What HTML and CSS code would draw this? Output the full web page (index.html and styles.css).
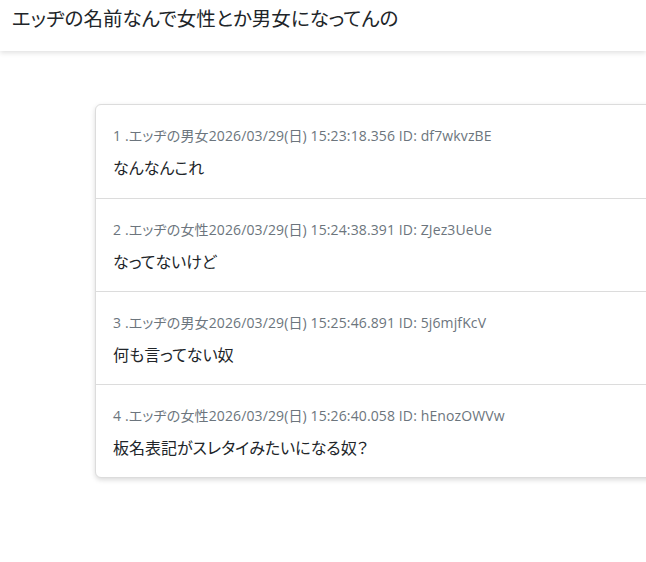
FILE: index.html
```html
<!DOCTYPE html>
<html lang="ja">
<head>
<meta charset="utf-8">
<title>スレ</title>
<link rel="stylesheet" href="styles.css">
</head>
<body>
<header class="topbar">
  <h1 class="title">エッヂの名前なんで女性とか男女になってんの</h1>
</header>
<main class="content">
  <ul class="posts">
    <li class="post">
      <div class="meta">1 .エッヂの男女2026/03/29(日) 15:23:18.356 ID: df7wkvzBE</div>
      <div class="body">なんなんこれ</div>
    </li>
    <li class="post">
      <div class="meta">2 .エッヂの女性2026/03/29(日) 15:24:38.391 ID: ZJez3UeUe</div>
      <div class="body">なってないけど</div>
    </li>
    <li class="post">
      <div class="meta">3 .エッヂの男女2026/03/29(日) 15:25:46.891 ID: 5j6mjfKcV</div>
      <div class="body">何も言ってない奴</div>
    </li>
    <li class="post">
      <div class="meta">4 .エッヂの女性2026/03/29(日) 15:26:40.058 ID: hEnozOWVw</div>
      <div class="body">板名表記がスレタイみたいになる奴？</div>
    </li>
  </ul>
</main>
</body>
</html>
```
FILE: styles.css
```css
html, body {
  margin: 0;
  padding: 0;
  background: #fff;
  overflow: hidden;
  width: 646px;
  height: 562px;
}
body {
  font-family: "Open Sans", "Noto Sans CJK JP", sans-serif;
  font-feature-settings: "palt";
  color: #212529;
}
.topbar {
  height: 51px;
  box-shadow: 0 2px 5px rgba(0,0,0,0.12);
  padding: 0 12px;
  display: flex;
  align-items: flex-start;
}
.title {
  margin: 0;
  padding-top: 5px;
  font-size: 19.5px;
  font-weight: 400;
  line-height: 28px;
}
.content {
  padding: 53px 0 0 95px;
}
.posts {
  list-style: none;
  margin: 0;
  padding: 0;
  width: 620px;
  border: 1px solid #dcdcdc;
  border-radius: 6px;
  box-shadow: 0 2px 5px rgba(0,0,0,0.15);
  background: #fff;
}
.post {
  padding: 20px 17px 17px;
  border-top: 1px solid #dcdcdc;
}
.post:first-child {
  border-top: none;
  padding-bottom: 18px;
}
.meta {
  font-size: 14px;
  line-height: 21px;
  letter-spacing: 0.12px;
  color: #6c757d;
}
.body {
  margin-top: 10px;
  font-size: 16px;
  line-height: 24px;
  color: #212529;
}
```
